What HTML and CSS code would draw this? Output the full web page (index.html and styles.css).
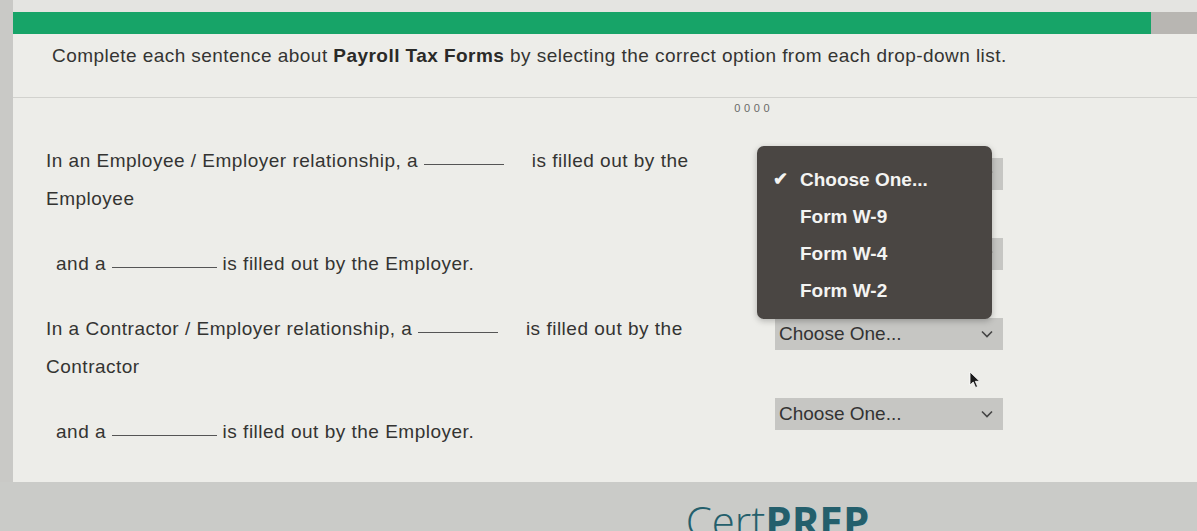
FILE: index.html
```html
<!DOCTYPE html>
<html lang="en">
<head>
    <meta charset="UTF-8">
    <meta name="viewport" content="width=device-width, initial-scale=1.0">
    <title>Payroll Tax Forms</title>
    <link rel="stylesheet" href="styles.css">
</head>
<body>

<div class="page">
    <div class="card">
        <div class="progress"><div class="progress-end"></div></div>

        <p class="prompt">Complete each sentence about <b>Payroll Tax Forms</b> by selecting the correct option from each drop-down list.</p>

        <div class="divider">
            <span class="counter">0 0 0 0</span>
        </div>

        <div class="quiz">
            <!-- sentences -->
            <div class="sentences">
                <p class="line">In an Employee / Employer relationship, a <span class="blank"></span> is filled out by the<br>Employee</p>
                <p class="line indent">and a <span class="blank wide"></span> is filled out by the Employer.</p>
                <p class="line">In a Contractor / Employer relationship, a <span class="blank"></span> is filled out by the<br>Contractor</p>
                <p class="line indent">and a <span class="blank wide"></span> is filled out by the Employer.</p>
            </div>

            <!-- drop-downs, the first one is open -->
            <div class="selects">
                <div class="select covered"><span class="label">Choose One...</span><svg class="chev" viewBox="0 0 12 8"><path d="M1 1.5 L6 6.5 L11 1.5"/></svg></div>
                <div class="select covered"><span class="label">Choose One...</span><svg class="chev" viewBox="0 0 12 8"><path d="M1 1.5 L6 6.5 L11 1.5"/></svg></div>
                <div class="select"><span class="label">Choose One...</span><svg class="chev" viewBox="0 0 12 8"><path d="M1 1.5 L6 6.5 L11 1.5"/></svg></div>
                <div class="select"><span class="label">Choose One...</span><svg class="chev" viewBox="0 0 12 8"><path d="M1 1.5 L6 6.5 L11 1.5"/></svg></div>

                <ul class="menu">
                    <li class="checked"><span class="tick">&#10004;</span>Choose One...</li>
                    <li>Form W-9</li>
                    <li>Form W-4</li>
                    <li>Form W-2</li>
                </ul>

                <svg class="cursor" viewBox="0 0 12 18"><path d="M1 1 L1 14 L4.2 11 L6.6 16.5 L8.6 15.6 L6.3 10.3 L10.6 10.3 Z"/></svg>
            </div>
        </div>
    </div>

    <div class="footer">
        <span class="logo"><span class="cert">Cert</span><span class="prep">PREP</span></span>
    </div>
</div>

</body>
</html>
```

FILE: styles.css
```css
body {
    font-family: "Liberation Sans", Arial, sans-serif;
    margin: 0;
    padding: 0;
    background: #e4e4e1;
    color: #343432;
    overflow: hidden;
}
.page {
    height: 531px;
    padding-top: 12px;
    box-sizing: border-box;
    background: linear-gradient(to right, #c9c9c6 0, #c9c9c6 13px, #e4e4e1 13px);
}
.card {
    margin-left: 13px;
    background: #edede9;
    height: 470px;
}
.progress {
    height: 22px;
    background: #17a468;
    display: flex;
    justify-content: flex-end;
}
.progress-end {
    width: 46px;
    background: #b8b6b2;
}
.prompt {
    margin: 0;
    padding: 10px 0 0 39px;
    font-size: 19px;
    line-height: 24px;
    letter-spacing: 0.45px;
}
.prompt b {
    color: #2a2a28;
}
.divider {
    margin-top: 29px;
    border-top: 1px solid #d2d2ce;
    text-align: center;
    padding-left: 294px;
    height: 14px;
}
.counter {
    display: inline-block;
    margin-top: 3px;
    font-size: 11px;
    color: #6a6a68;
    letter-spacing: 0.3px;
}
.quiz {
    display: flex;
    padding: 30px 0 0 33px;
}
.sentences {
    width: 729px;
}
.line {
    margin: 0 0 27px 0;
    font-size: 19px;
    line-height: 38px;
    letter-spacing: 0.5px;
}
.line.indent {
    padding-left: 10px;
}
.blank {
    display: inline-block;
    width: 80px;
    margin-right: 22px;
    border-bottom: 1px solid #555;
    vertical-align: 2px;
}
.blank.wide {
    width: 105px;
    margin-right: 0;
}
.selects {
    position: relative;
    display: flex;
    flex-direction: column;
    gap: 48px;
    padding-top: 16px;
    width: 228px;
}
.select {
    height: 32px;
    background: #c6c6c3;
    display: flex;
    align-items: center;
    justify-content: space-between;
    padding: 0 10px 0 4px;
    font-size: 19px;
    color: #333;
}
.select.covered .label {
    visibility: hidden;
}
.chev {
    width: 12px;
    height: 8px;
    fill: none;
    stroke: #444;
    stroke-width: 1.6;
}
.menu {
    position: absolute;
    left: -18px;
    top: 4px;
    width: 235px;
    margin: 0;
    padding: 15px 0 10px 0;
    list-style: none;
    background: #4a4643;
    border-radius: 7px;
    box-shadow: 0 2px 6px rgba(0, 0, 0, 0.25);
}
.menu li {
    height: 37px;
    line-height: 37px;
    padding-left: 43px;
    color: #f4f4f2;
    font-weight: bold;
    font-size: 19px;
    position: relative;
}
.tick {
    position: absolute;
    left: 16px;
    font-size: 18px;
}
.cursor {
    position: absolute;
    left: 194px;
    top: 229px;
    width: 12px;
    height: 18px;
    fill: #1a1a1a;
    stroke: #fff;
    stroke-width: 0.8;
}
.footer {
    height: 49px;
    background: #cacbc8;
    text-align: center;
    padding-left: 358px;
    overflow: hidden;
}
.logo {
    display: inline-block;
    margin-top: 16px;
    font-family: "Open Sans", "Liberation Sans", sans-serif;
    font-size: 42px;
    line-height: 46px;
    color: #245f6c;
}
.cert {
    font-weight: 300;
}
.prep {
    font-weight: 700;
}
```
